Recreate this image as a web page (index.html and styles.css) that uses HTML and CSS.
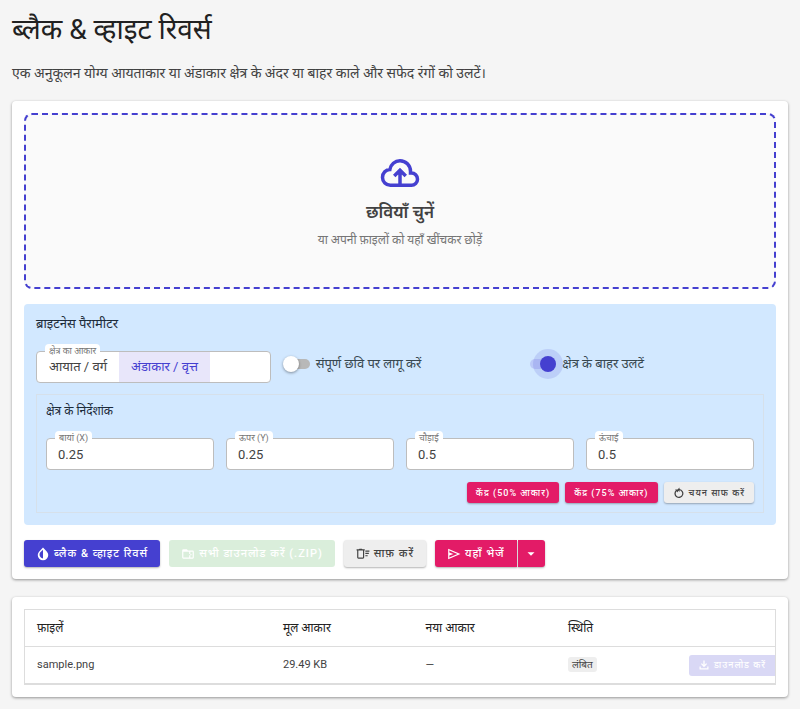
FILE: index.html
```
<!DOCTYPE html>
<html lang="hi">
<head>
	<meta charset="utf-8">
	<meta name="viewport" content="width=device-width, initial-scale=1">
	<title>ब्लैक &amp; व्हाइट रिवर्स</title>
	<link rel="stylesheet" href="styles.css">
</head>
<body>
	<header class="page-head">
		<h1>ब्लैक &amp; व्हाइट रिवर्स</h1>
		<p>एक अनुकूलन योग्य आयताकार या अंडाकार क्षेत्र के अंदर या बाहर काले और सफेद रंगों को उलटें।</p>
	</header>

	<main>
		<section class="card">
			<button type="button" class="dropzone">
				<svg class="cloud" viewBox="0 0 24 24"><path d="M11 19H6.500A4.500 4.500 0 0 1 2 14.500C2 12 4 10 6.200 10A6 6 0 0 1 12 5a6 6 0 0 1 6 6v1h.5a3.500 3.500 0 0 1 0 7H12V10.500M8.700 13.700 12 10.400l3.300 3.300"/></svg>
				<span class="drop-title">छवियाँ चुनें</span>
				<span class="drop-hint">या अपनी फ़ाइलों को यहाँ खींचकर छोड़ें</span>
			</button>

			<div class="params">
				<h2>ब्राइटनेस पैरामीटर</h2>
				<div class="options">
					<div class="field shape" role="group" aria-labelledby="shapeLabel">
						<span class="field-label" id="shapeLabel">क्षेत्र का आकार</span>
						<button type="button">आयात / वर्ग</button>
						<button type="button" class="selected" aria-pressed="true">अंडाकार / वृत्त</button>
					</div>
					<label class="switch"><input type="checkbox" role="switch"><span>संपूर्ण छवि पर लागू करें</span></label>
					<label class="switch"><input type="checkbox" role="switch" checked><span>क्षेत्र के बाहर उलटें</span></label>
				</div>

				<div class="coords">
					<h3>क्षेत्र के निर्देशांक</h3>
					<div class="coord-fields">
						<div class="field">
							<label class="field-label" for="posX">बायां (X)</label>
							<input type="text" id="posX" value="0.25">
						</div>
						<div class="field">
							<label class="field-label" for="posY">ऊपर (Y)</label>
							<input type="text" id="posY" value="0.25">
						</div>
						<div class="field">
							<label class="field-label" for="areaW">चौड़ाई</label>
							<input type="text" id="areaW" value="0.5">
						</div>
						<div class="field">
							<label class="field-label" for="areaH">ऊंचाई</label>
							<input type="text" id="areaH" value="0.5">
						</div>
					</div>
					<div class="coord-actions">
						<button type="button" class="btn small pink">केंद्र (50% आकार)</button>
						<button type="button" class="btn small pink">केंद्र (75% आकार)</button>
						<button type="button" class="btn small grey">
							<svg viewBox="0 0 24 24"><path d="M13 1v3.100A9 9 0 1 1 5.600 6.500L4 5h6v6L7.400 8.300A6.500 6.500 0 1 0 13 6.600V10L8.500 5.500 13 1z"/></svg>
							चयन साफ करें
						</button>
					</div>
				</div>
			</div>

			<div class="actions">
				<button type="button" class="btn blue">
					<svg viewBox="0 0 24 24"><path fill-rule="evenodd" d="M12 1 5.600 7.500a9 9 0 1 0 12.800 0L12 1zM12 19.500a6.500 6.500 0 0 1-4.600-10.400L12 4.500v15z"/></svg>
					ब्लैक &amp; व्हाइट रिवर्स
				</button>
				<button type="button" class="btn green" disabled>
					<svg viewBox="0 0 24 24"><path fill-rule="evenodd" d="M20 6h-8l-2-2H4a2 2 0 0 0-2 2v12a2 2 0 0 0 2 2h16a2 2 0 0 0 2-2V8a2 2 0 0 0-2-2zM4 8h10v2h2V8h4v10h-4v-2h-2v2H4V8zm10 2v2h2v-2zm2 2v2h2v-2zm-2 2v2h2v-2z"/></svg>
					सभी डाउनलोड करें (.ZIP)
				</button>
				<button type="button" class="btn grey">
					<svg viewBox="0 0 24 24"><path fill-rule="evenodd" d="M10 3H6L5 4H1v2h1v12a2 2 0 0 0 2 2h8a2 2 0 0 0 2-2V6h1V4h-4l-1-1zM4 6h8v12H4V6zm12 0h7v2h-7zm0 4h6v2h-6zm0 4h4v2h-4z"/></svg>
					साफ़ करें
				</button>
				<div class="split">
					<button type="button" class="btn pink">
						<svg viewBox="0 0 24 24"><path fill-rule="evenodd" d="M2 3v18l21-9L2 3zm2 3.100L17.900 12 4 17.900v-3.500l7-2.400-7-2.400V6.100z"/></svg>
						यहाँ भेजें
					</button>
					<button type="button" class="btn pink more" aria-label="और विकल्प">
						<svg viewBox="0 0 24 24"><path d="M6 9h12l-6 6z"/></svg>
					</button>
				</div>
			</div>
		</section>

		<section class="card">
			<table class="files">
				<thead>
					<tr><th>फ़ाइलें</th><th>मूल आकार</th><th>नया आकार</th><th>स्थिति</th><th></th></tr>
				</thead>
				<tbody>
					<tr>
						<td>sample.png</td>
						<td>29.49 KB</td>
						<td>—</td>
						<td><span class="chip">लंबित</span></td>
						<td class="cell-action">
							<button type="button" class="btn small blue" disabled>
								<svg viewBox="0 0 24 24"><path d="M10.700 3h2.600v8.300l3-3 1.800 1.900-6.100 6.100-6.100-6.100 1.800-1.900 3 3V3zM3 15h2.500v3.500h13V15H21v6H3v-6z"/></svg>
								डाउनलोड करें
							</button>
						</td>
					</tr>
				</tbody>
			</table>
		</section>
	</main>
</body>
</html>
```
FILE: styles.css
```
*{
	box-sizing: border-box;
}
body{
	margin: 0;
	padding: 10px 12px 12px;
	background: #f5f5f5;
	color: #424242;
	font: 13px/20px Roboto, "Noto Sans", sans-serif;
}
h1, h2, h3, p{
	margin: 0;
}
button, input{
	font: inherit;
	color: inherit;
}
button{
	margin: 0;
	padding: 0;
	border: none;
	background: none;
	cursor: pointer;
}
svg{
	flex: none;
	width: 14px;
	height: 14px;
	fill: currentColor;
}
.page-head h1{
	color: #212121;
	font-size: 28px;
	font-weight: 400;
	line-height: 40px;
}
.page-head p{
	margin: 13px 0 18px;
	font-size: 14px;
}
.card{
	margin-bottom: 18px;
	padding: 12px;
	border-radius: 4px;
	background: #fff;
	box-shadow: 0 1px 3px rgba(0,0,0,0.4);
}

/* dropzone */
.dropzone{
	display: flex;
	flex-direction: column;
	align-items: center;
	justify-content: center;
	width: 100%;
	height: 176px;
	border: 2px dashed #4540d0;
	border-radius: 8px;
	background: #fafafa;
}
.cloud{
	width: 42px;
	height: 42px;
	fill: none;
	stroke: #4540d0;
	stroke-width: 2;
}
.drop-title{
	margin: 4px 0;
	font-size: 17px;
	font-weight: 600;
	line-height: 28px;
}
.drop-hint{
	color: #757575;
	font-size: 12px;
}

/* parameters */
.params{
	margin-top: 15px;
	padding: 10px 12px 12px;
	border-radius: 4px;
	background: #d2e8ff;
}
.params h2{
	color: #1c2b3a;
	font-size: 13px;
	font-weight: 400;
}
.options{
	display: grid;
	grid-template-columns: repeat(3, 1fr);
	gap: 12px;
	margin-top: 17px;
}
.field{
	position: relative;
	height: 32px;
	border: 1px solid #bdbdbd;
	border-radius: 4px;
	background: #fff;
}
.field-label{
	position: absolute;
	top: -8px;
	left: 8px;
	padding: 0 4px;
	border-radius: 4px;
	background: #fff;
	color: #757575;
	font-size: 9px;
	line-height: 14px;
	white-space: nowrap;
}
.field input{
	width: 100%;
	height: 30px;
	padding: 0 11px;
	border: none;
	border-radius: 4px;
	background: none;
	outline: none;
}
.shape{
	display: flex;
}
.shape button{
	padding: 0 12px;
	white-space: nowrap;
}
.shape .selected{
	background: #e8e6fa;
	color: #4540d0;
}
.switch{
	display: flex;
	align-items: center;
	gap: 6px;
	height: 26px;
	padding-left: 1px;
	color: #37474f;
	white-space: nowrap;
}
.switch input{
	position: relative;
	flex: none;
	width: 26px;
	height: 10px;
	margin: 0;
	border-radius: 5px;
	appearance: none;
	background: #b8b8b8;
}
.switch input::before{
	content: "";
	position: absolute;
	top: -3px;
	left: -1px;
	width: 16px;
	height: 16px;
	border-radius: 50%;
	background: #fff;
	box-shadow: 0 1px 3px rgba(0,0,0,0.4);
}
.switch input:checked{
	background: #bccaf8;
}
.switch input:checked::before{
	left: 10px;
	background: #4540d0;
	box-shadow: 0 0 0 7px rgba(69,64,208,0.15);
}
.coords{
	margin-top: 11px;
	padding: 6px 9px 9px;
	border: 1px solid #d6e0ea;
}
.coords h3{
	color: #1c2b3a;
	font-size: 12px;
	font-weight: 400;
}
.coord-fields{
	display: grid;
	grid-template-columns: repeat(4, 1fr);
	gap: 12px;
	margin-top: 17px;
}
.coord-actions{
	display: flex;
	justify-content: flex-end;
	gap: 6px;
	margin-top: 12px;
}

/* buttons */
.btn{
	display: inline-flex;
	align-items: center;
	justify-content: center;
	gap: 4px;
	height: 27px;
	padding: 0 12px;
	border-radius: 3px;
	font-size: 11px;
	font-weight: 500;
	letter-spacing: 1px;
	white-space: nowrap;
	box-shadow: 0 1px 2px rgba(0,0,0,0.3);
}
.btn.small{
	height: 21px;
	padding: 0 9px;
	font-size: 9px;
}
.btn.small svg{
	width: 12px;
	height: 12px;
}
.btn.pink{
	background: #e31b67;
	color: #fff;
}
.btn.grey{
	background: #eee;
	color: #424242;
}
.btn.blue{
	background: #4540d0;
	color: #fff;
}
.btn.green{
	background: #4caf50;
	color: #fff;
}
.btn:disabled{
	opacity: 0.2;
	box-shadow: none;
	cursor: default;
}
.actions{
	display: flex;
	gap: 9px;
	margin-top: 15px;
}
.split{
	display: flex;
	gap: 1px;
}
.split .btn:first-child{
	border-radius: 3px 0 0 3px;
}
.split .more{
	width: 27px;
	padding: 0;
	border-radius: 0 3px 3px 0;
}

/* file list */
.files{
	width: 100%;
	table-layout: fixed;
	border: 1px solid #ddd;
	border-bottom-width: 2px;
	border-collapse: separate;
	border-spacing: 0;
	font-size: 11px;
}
.files th,
.files td{
	height: 36px;
	padding: 0 12px;
	text-align: left;
	white-space: nowrap;
}
.files th{
	height: 37px;
	border-bottom: 1px solid #ddd;
	color: #212121;
	font-size: 12px;
	font-weight: 400;
}
.files th:nth-child(2),
.files th:nth-child(3){
	width: 19%;
}
.files th:nth-child(4){
	width: 133px;
}
.files th:last-child{
	width: 86px;
}
.files .cell-action{
	padding: 0;
	overflow: hidden;
}
.cell-action .btn{
	width: 100%;
	vertical-align: middle;
	border-radius: 3px 0 0 3px;
}
.chip{
	display: inline-block;
	padding: 0 4px;
	border-radius: 3px;
	background: #eee;
	font-size: 10px;
	line-height: 15px;
}
```
